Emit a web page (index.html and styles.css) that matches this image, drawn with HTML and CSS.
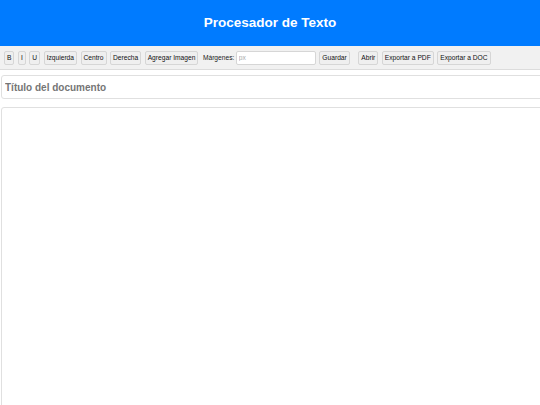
FILE: index.html
```html
<!DOCTYPE html>
<html lang="es">
  <head>
    <meta charset="UTF-8" />
    <meta name="viewport" content="width=device-width, initial-scale=1.0" />
    <title>Procesador de Texto</title>
    <link rel="stylesheet" href="styles.css">
  </head>
  <body>
    <div class="header">Procesador de Texto</div>
    <div class="toolbar">
      <button>B</button>
      <button>I</button>
      <button>U</button>
      <button>Izquierda</button>
      <button>Centro</button>
      <button>Derecha</button>
      <button>Agregar Imagen</button>
      <label class="margin-label">Márgenes:</label>
      <input type="text" class="margin-input" placeholder="px" />
      <button>Guardar</button>
      <button class="group-start">Abrir</button>
      <button>Exportar a PDF</button>
      <button>Exportar a DOC</button>
    </div>
    <div class="content">
      <input type="text" class="doc-title" placeholder="Título del documento" />
      <div class="editor" contenteditable="true"></div>
    </div>
  </body>
</html>
```

FILE: styles.css
```css
html,
body {
  overflow: hidden;
}

body {
  font-family: "Liberation Sans", Arial, sans-serif;
  background-color: #fff;
  margin: 0;
  padding: 0;
}

.header {
  background-color: #007bff;
  color: white;
  height: 46px;
  line-height: 46px;
  text-align: center;
  font-size: 13.5px;
  font-weight: bold;
}

.toolbar {
  display: flex;
  align-items: center;
  gap: 3.5px;
  height: 23px;
  padding: 0 4px;
  background-color: #f1f1f1;
  border-bottom: 1px solid #dcdcdc;
}

.toolbar button {
  height: 14px;
  box-sizing: border-box;
  padding: 0 2px;
  font-family: "Liberation Sans", Arial, sans-serif;
  font-size: 6.67px;
  color: #111;
  background-color: #efefef;
  border: 1px solid #d6d6d6;
  border-radius: 2px;
  cursor: pointer;
}

.toolbar .group-start {
  margin-left: 5px;
}

.margin-label {
  font-size: 6.67px;
  color: #222;
  margin-left: 1px;
  margin-right: -2px;
}

.margin-input {
  width: 80px;
  height: 14px;
  box-sizing: border-box;
  padding: 0 2px;
  font-family: "Liberation Sans", Arial, sans-serif;
  font-size: 6.67px;
  border: 1px solid #d6d6d6;
  border-radius: 2px;
  background-color: #fff;
}

.margin-input::placeholder {
  color: #aaa;
}

.content {
  padding: 5px 1px 0;
}

.doc-title {
  display: block;
  width: calc(100% + 20px);
  height: 24px;
  box-sizing: border-box;
  padding: 0 3px;
  font-family: "Liberation Sans", Arial, sans-serif;
  font-size: 10px;
  font-weight: bold;
  border: 1px solid #e0e0e0;
  border-radius: 3px;
  margin-bottom: 8px;
}

.doc-title::placeholder {
  color: #757575;
}

.editor {
  width: calc(100% + 20px);
  height: 500px;
  box-sizing: border-box;
  border: 1px solid #e0e0e0;
  border-radius: 3px;
  background-color: #fff;
}
```
